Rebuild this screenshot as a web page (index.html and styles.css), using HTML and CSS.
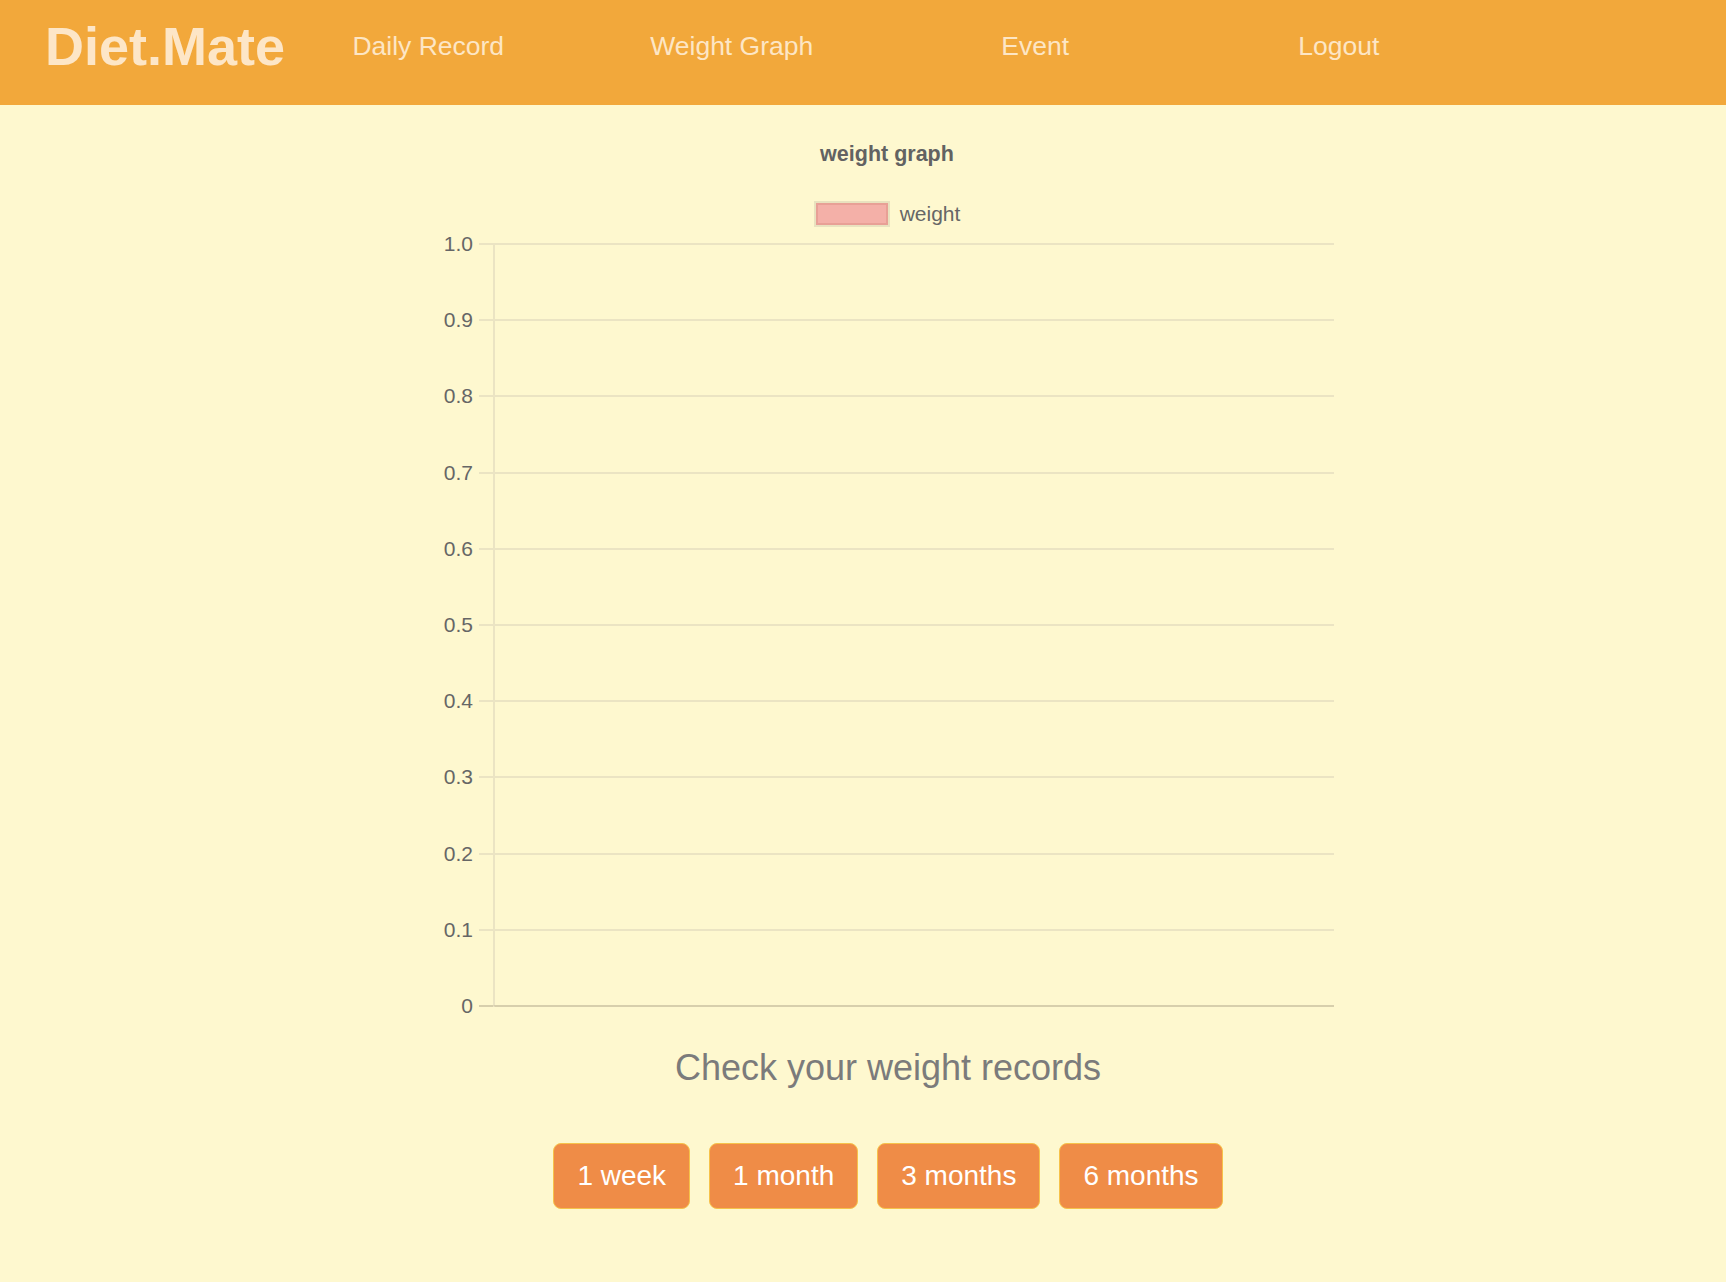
FILE: index.html
```html
<!DOCTYPE html>
<html lang="en">
<head>
<meta charset="utf-8">
<title>Diet.Mate - Weight Graph</title>
<link rel="stylesheet" href="styles.css">
</head>
<body>
<header class="topbar">
  <div class="logo">Diet.Mate</div>
  <nav class="nav">
    <a class="nav-link" href="#">Daily Record</a>
    <a class="nav-link" href="#">Weight Graph</a>
    <a class="nav-link" href="#">Event</a>
    <a class="nav-link" href="#">Logout</a>
  </nav>
</header>
<main class="main">
  <section class="chart">
    <div class="chart-title">weight graph</div>
    <div class="legend">
      <span class="legend-box"></span>
      <span class="legend-label">weight</span>
    </div>
    <div class="plot">
      <div class="row"><span class="ylab">1.0</span><span class="tick"></span><span class="cell"></span></div>
      <div class="row"><span class="ylab">0.9</span><span class="tick"></span><span class="cell"></span></div>
      <div class="row"><span class="ylab">0.8</span><span class="tick"></span><span class="cell"></span></div>
      <div class="row"><span class="ylab">0.7</span><span class="tick"></span><span class="cell"></span></div>
      <div class="row"><span class="ylab">0.6</span><span class="tick"></span><span class="cell"></span></div>
      <div class="row"><span class="ylab">0.5</span><span class="tick"></span><span class="cell"></span></div>
      <div class="row"><span class="ylab">0.4</span><span class="tick"></span><span class="cell"></span></div>
      <div class="row"><span class="ylab">0.3</span><span class="tick"></span><span class="cell"></span></div>
      <div class="row"><span class="ylab">0.2</span><span class="tick"></span><span class="cell"></span></div>
      <div class="row"><span class="ylab">0.1</span><span class="tick"></span><span class="cell"></span></div>
      <div class="row zero"><span class="ylab">0</span><span class="tick"></span><span class="cell"></span></div>
    </div>
  </section>
  <h2 class="records-heading">Check your weight records</h2>
  <div class="ranges">
    <button class="range-btn">1 week</button>
    <button class="range-btn">1 month</button>
    <button class="range-btn">3 months</button>
    <button class="range-btn">6 months</button>
  </div>
</main>
</body>
</html>
```

FILE: styles.css
```css
* {
  box-sizing: border-box;
}

html, body {
  margin: 0;
  padding: 0;
}

body {
  background: #fef8cf;
  font-family: "Liberation Sans", Arial, Helvetica, sans-serif;
  min-height: 1282px;
}

.topbar {
  height: 105px;
  background: #f2a83b;
  display: flex;
  align-items: center;
  padding-bottom: 13px;
}

.logo {
  width: 276.5px;
  flex: none;
  padding-left: 45px;
  font-size: 54px;
  font-weight: bold;
  color: #fde6c7;
  white-space: nowrap;
}

.nav {
  display: flex;
}

.nav-link {
  width: 303.5px;
  text-align: center;
  font-size: 26.5px;
  color: #fde6c5;
  text-decoration: none;
  white-space: nowrap;
}

.main {
  padding-left: 50px;
  display: flex;
  flex-direction: column;
  align-items: center;
}

.chart {
  width: 896px;
  padding-right: 2px;
  display: flex;
  flex-direction: column;
  color: #666666;
}

.chart-title {
  margin-top: 37px;
  text-align: center;
  font-size: 21.5px;
  line-height: 24px;
  font-weight: bold;
  color: #626262;
}

.legend {
  margin-top: 35px;
  height: 26px;
  display: flex;
  align-items: center;
  justify-content: center;
  gap: 10px;
}

.legend-box {
  width: 76px;
  height: 26px;
  border: 2px solid #e9e2bf;
  background: #f4b0a8;
  box-shadow: inset 0 0 0 2px #e8a096;
}

.legend-label {
  font-size: 21px;
  line-height: 24px;
}

.plot {
  margin-top: 16px;
  display: flex;
  flex-direction: column;
}

.row {
  display: flex;
  align-items: flex-start;
  height: 76.2px;
}

.row.zero {
  height: 2px;
}

.ylab {
  width: 33px;
  flex: none;
  margin-right: 6px;
  margin-top: -11px;
  height: 24px;
  text-align: right;
  font-size: 21px;
  line-height: 24px;
  color: #666666;
}

.tick {
  width: 14px;
  flex: none;
  border-top: 2px solid #ebe4c3;
}

.cell {
  flex: 1;
  align-self: stretch;
  border-top: 2px solid #ebe4c3;
  border-left: 2px solid #ebe4c3;
}

.row.zero .tick,
.row.zero .cell {
  border-top-color: #d7cfac;
}

.records-heading {
  margin: 40px 0 0;
  font-size: 36px;
  line-height: 42px;
  font-weight: normal;
  color: #7b7b7b;
}

.ranges {
  margin-top: 54px;
  display: flex;
  gap: 19px;
}

.range-btn {
  font-family: "Liberation Sans", Arial, Helvetica, sans-serif;
  font-size: 28px;
  line-height: 32px;
  padding: 16px 23px;
  border: 1px solid #f6c24a;
  border-radius: 8px;
  background: #ef8c47;
  color: #ffffff;
  cursor: pointer;
}
```
